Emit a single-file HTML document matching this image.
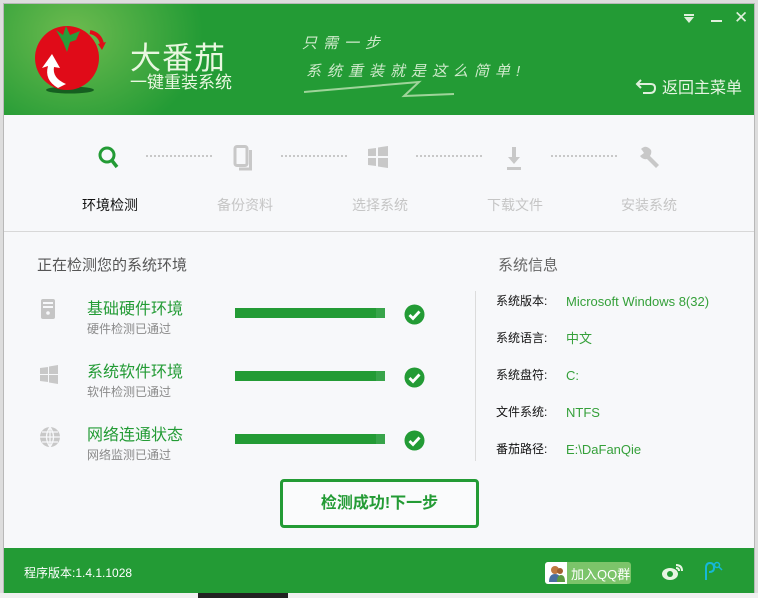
<!DOCTYPE html>
<html><head><meta charset="utf-8"><style>
*{margin:0;padding:0;box-sizing:border-box}
body{width:758px;height:598px;background:#ddd;position:relative;overflow:hidden;font-family:"Liberation Sans","Noto Sans CJK SC",sans-serif}
.win{position:absolute;left:3px;top:3px;width:752px;height:590px;background:#f7f8fa;border:1px solid #b8b8b8}
.hd{position:absolute;left:0;top:0;width:750px;height:111px;background:#239b35;overflow:hidden}
.glow{position:absolute;left:-60px;top:-80px;width:260px;height:220px;background:radial-gradient(ellipse at center,rgba(140,200,90,.7),rgba(35,155,53,0) 70%)}
.abs{position:absolute}
.g{color:#239b35}
.ft{position:absolute;left:0;top:544px;width:750px;height:45px;background:#239b35}
</style></head><body>
<div style="position:absolute;left:0;top:593px;width:758px;height:5px;background:#f0f0f0"></div>
<div style="position:absolute;left:198px;top:593px;width:90px;height:5px;background:#222"></div>
<div class="win">
<div class="hd">
<div class="glow"></div>
<svg class="abs" style="left:26px;top:18px" width="84" height="76" viewBox="0 0 84 76">
<ellipse cx="40" cy="68" rx="24" ry="3.5" fill="#155f20"/>
<circle cx="37" cy="36" r="32" fill="#e00b18"/>
<path d="M26 8 L33 13 L36 4 L40 13 L50 9 L46 18 L40 20 L37 30 L33 20 Z" fill="#2a9c3a"/>
<path d="M28 66 Q14 58 18 44 L12 46 L22 32 L30 46 L24 45 Q22 56 36 62 Z" fill="#fff"/>
<path d="M60 10 Q70 12 72 22" stroke="#e00b18" stroke-width="4" fill="none"/>
<path d="M68 22 L76 20 L72 28 Z" fill="#e00b18"/>
</svg>
<div class="abs" style="left:126px;top:29px;font-size:31px;color:#e9f7e0;letter-spacing:1px">大番茄</div>
<div class="abs" style="left:126px;top:64px;font-size:17px;color:#e9f7e0">一键重装系统</div>
<div class="abs" style="left:298px;top:28px;font-size:15px;color:#cfeacb;letter-spacing:6px;font-style:italic">只需一步</div>
<div class="abs" style="left:302px;top:56px;font-size:15px;color:#cfeacb;letter-spacing:6px;font-style:italic">系统重装就是这么简单!</div>
<svg class="abs" style="left:300px;top:70px" width="230" height="24"><path d="M0 18 L115 8 L100 22 L150 20" stroke="#9fd49a" stroke-width="2" fill="none"/></svg>
<div class="abs" style="left:680px;top:10px;width:10px;height:2px;background:#dff0dc"></div>
<div class="abs" style="left:680px;top:13px;width:0;height:0;border-left:5px solid transparent;border-right:5px solid transparent;border-top:6px solid #dff0dc"></div>
<div class="abs" style="left:707px;top:16px;width:11px;height:2px;background:#dff0dc"></div>
<div class="abs" style="left:730px;top:4px;font-size:17px;color:#dff0dc">✕</div>
<svg class="abs" style="left:631px;top:73px" width="24" height="18"><path d="M6 3 L2 7 L6 11 M2 7 H16 Q20 7 20 11 Q20 16 15 16 H8" stroke="#dff0dc" stroke-width="2" fill="none"/></svg>
<div class="abs" style="left:658px;top:70px;font-size:16px;color:#e6f4e2">返回主菜单</div>
</div>
<!-- steps -->
<svg class="abs" style="left:93px;top:141px" width="24" height="26"><circle cx="10" cy="10" r="7" stroke="#239b35" stroke-width="3" fill="none"/><path d="M14.5 15 L20 22" stroke="#239b35" stroke-width="3.5"/></svg>
<div class="abs" style="left:142px;top:151px;width:66px;border-top:2px dotted #c8c8c8"></div>
<div class="abs" style="left:277px;top:151px;width:66px;border-top:2px dotted #c8c8c8"></div>
<div class="abs" style="left:412px;top:151px;width:66px;border-top:2px dotted #c8c8c8"></div>
<div class="abs" style="left:547px;top:151px;width:66px;border-top:2px dotted #c8c8c8"></div>
<svg class="abs" style="left:229px;top:141px" width="22" height="26"><rect x="2" y="1.5" width="12" height="19" rx="2" stroke="#c8c8c8" stroke-width="3" fill="none"/><path d="M17.5 5 V24 H6" stroke="#c8c8c8" stroke-width="3" fill="none"/></svg>
<svg class="abs" style="left:363px;top:142px" width="22" height="24"><path d="M1 3 L9 2 V10 H1Z M11 1.5 L21 0 V10 H11Z M1 12 H9 V20 L1 19Z M11 12 H21 V22 L11 20.5Z" fill="#c8c8c8"/></svg>
<svg class="abs" style="left:499px;top:142px" width="22" height="26"><path d="M9 1 H13 V11 H17 L11 18 L5 11 H9Z" fill="#c8c8c8"/><rect x="4" y="21" width="14" height="3" fill="#c8c8c8"/></svg>
<svg class="abs" style="left:633px;top:141px" width="26" height="26"><path d="M4 4 Q9 -1 14 5 Q15 8 13 11 L22 20 L19 23 L10 14 Q6 15 3 11 L7 8 L5 5Z" fill="#c8c8c8"/></svg>
<div class="abs" style="left:78px;top:191px;font-size:14px;color:#111">环境检测</div>
<div class="abs" style="left:213px;top:191px;font-size:14px;color:#c5c5c5">备份资料</div>
<div class="abs" style="left:348px;top:191px;font-size:14px;color:#c5c5c5">选择系统</div>
<div class="abs" style="left:483px;top:191px;font-size:14px;color:#c5c5c5">下载文件</div>
<div class="abs" style="left:617px;top:191px;font-size:14px;color:#c5c5c5">安装系统</div>
<div class="abs" style="left:0;top:227px;width:750px;height:1px;background:#d8d8d8"></div>
<!-- left -->
<div class="abs" style="left:33px;top:250px;font-size:15px;color:#555">正在检测您的系统环境</div>
<svg class="abs" style="left:37px;top:295px" width="14" height="22"><rect x="0" y="0" width="14" height="20" rx="2" fill="#c5c5c5"/><rect x="2" y="3" width="10" height="2" fill="#f7f8fa"/><rect x="2" y="7" width="10" height="2" fill="#f7f8fa"/><circle cx="7" cy="14" r="1.8" fill="#f7f8fa"/></svg>
<svg class="abs" style="left:36px;top:361px" width="20" height="20"><path d="M0 3 L8 2 V9 H0Z M9 1.5 L18 0 V9 H9Z M0 10 H8 V17 L0 16Z M9 10 H18 V19 L9 17.5Z" fill="#c8c8c8"/></svg>
<svg class="abs" style="left:35px;top:422px" width="22" height="22"><circle cx="11" cy="11" r="10" fill="#c8c8c8"/><path d="M11 1 V21 M1 11 H21 M3 6 H19 M3 16 H19 M11 1 Q4 11 11 21 M11 1 Q18 11 11 21" stroke="#f7f8fa" stroke-width="1.3" fill="none"/></svg>
<div class="abs g" style="left:83px;top:291px;font-size:16px">基础硬件环境</div>
<div class="abs" style="left:83px;top:316px;font-size:12px;color:#8a8a8a">硬件检测已通过</div>
<div class="abs g" style="left:83px;top:354px;font-size:16px">系统软件环境</div>
<div class="abs" style="left:83px;top:379px;font-size:12px;color:#8a8a8a">软件检测已通过</div>
<div class="abs g" style="left:83px;top:417px;font-size:16px">网络连通状态</div>
<div class="abs" style="left:83px;top:442px;font-size:12px;color:#8a8a8a">网络监测已通过</div>
<div class="abs" style="left:231px;top:304px;width:150px;height:10px;background:#239b35;border-right:9px solid #38a44a"></div>
<div class="abs" style="left:231px;top:367px;width:150px;height:10px;background:#239b35;border-right:9px solid #38a44a"></div>
<div class="abs" style="left:231px;top:430px;width:150px;height:10px;background:#239b35;border-right:9px solid #38a44a"></div>
<svg class="abs" style="left:400px;top:300px" width="21" height="21"><circle cx="10.5" cy="10.5" r="10" fill="#239b35"/><path d="M5.5 11 L9 14.5 L15.5 7.5" stroke="#fff" stroke-width="2.8" fill="none"/></svg>
<svg class="abs" style="left:400px;top:363px" width="21" height="21"><circle cx="10.5" cy="10.5" r="10" fill="#239b35"/><path d="M5.5 11 L9 14.5 L15.5 7.5" stroke="#fff" stroke-width="2.8" fill="none"/></svg>
<svg class="abs" style="left:400px;top:426px" width="21" height="21"><circle cx="10.5" cy="10.5" r="10" fill="#239b35"/><path d="M5.5 11 L9 14.5 L15.5 7.5" stroke="#fff" stroke-width="2.8" fill="none"/></svg>
<!-- right -->
<div class="abs" style="left:471px;top:287px;width:1px;height:170px;background:#dcdcdc"></div>
<div class="abs" style="left:494px;top:250px;font-size:15px;color:#666">系统信息</div>
<div class="abs" style="left:492px;top:279px;font-size:12px;line-height:37px;color:#111">系统版本:<br>系统语言:<br>系统盘符:<br>文件系统:<br>番茄路径:</div>
<div class="abs g" style="left:562px;top:279px;font-size:13px;line-height:37px;color:#35a03a">Microsoft Windows 8(32)<br>中文<br>C:<br>NTFS<br>E:\DaFanQie</div>
<div class="abs" style="left:276px;top:475px;width:199px;height:49px;border:3px solid #239b35;border-radius:4px;background:#fafbfc;text-align:center;line-height:43px;font-size:16px;font-weight:bold;color:#239b35">检测成功!下一步</div>
<div class="ft">
<div class="abs" style="left:20px;top:16px;font-size:12px;color:#fff">程序版本:1.4.1.1028</div>
<div class="abs" style="left:541px;top:14px;width:86px;height:22px;background:#7cc46a;border-radius:3px"></div>
<div class="abs" style="left:541px;top:14px;width:22px;height:22px;background:#fff;border-radius:3px 0 0 3px"></div>
<svg class="abs" style="left:544px;top:16px" width="18" height="18"><circle cx="7" cy="6" r="4" fill="#c07840"/><path d="M1 18 Q1 10 7 10 Q13 10 13 18Z" fill="#4a6ea0"/><circle cx="12" cy="7" r="3" fill="#a06030"/><path d="M9 18 Q9 11 13 11 Q17 11 17 18Z" fill="#5a9a40"/></svg>
<div class="abs" style="left:567px;top:16px;font-size:13px;color:#fff">加入QQ群</div>
<svg class="abs" style="left:657px;top:13px" width="24" height="20"><ellipse cx="9" cy="13" rx="8" ry="6" fill="#e8f5e3"/><circle cx="9" cy="13" r="3" fill="#239b35"/><path d="M15 4 Q21 4 21 10 M15 7 Q18 7 18 10" stroke="#e8f5e3" stroke-width="2" fill="none"/></svg>
<svg class="abs" style="left:697px;top:12px" width="22" height="22"><path d="M5 20 L5 8 Q5 3 9 3 Q13 3 13 8 Q13 12 8 12" stroke="#16b8d8" stroke-width="2" fill="none"/><circle cx="16" cy="5" r="2.5" stroke="#16b8d8" stroke-width="1.5" fill="none"/><path d="M18 7 L21 10" stroke="#16b8d8" stroke-width="1.5"/></svg>
</div>
</div>
</body></html>
